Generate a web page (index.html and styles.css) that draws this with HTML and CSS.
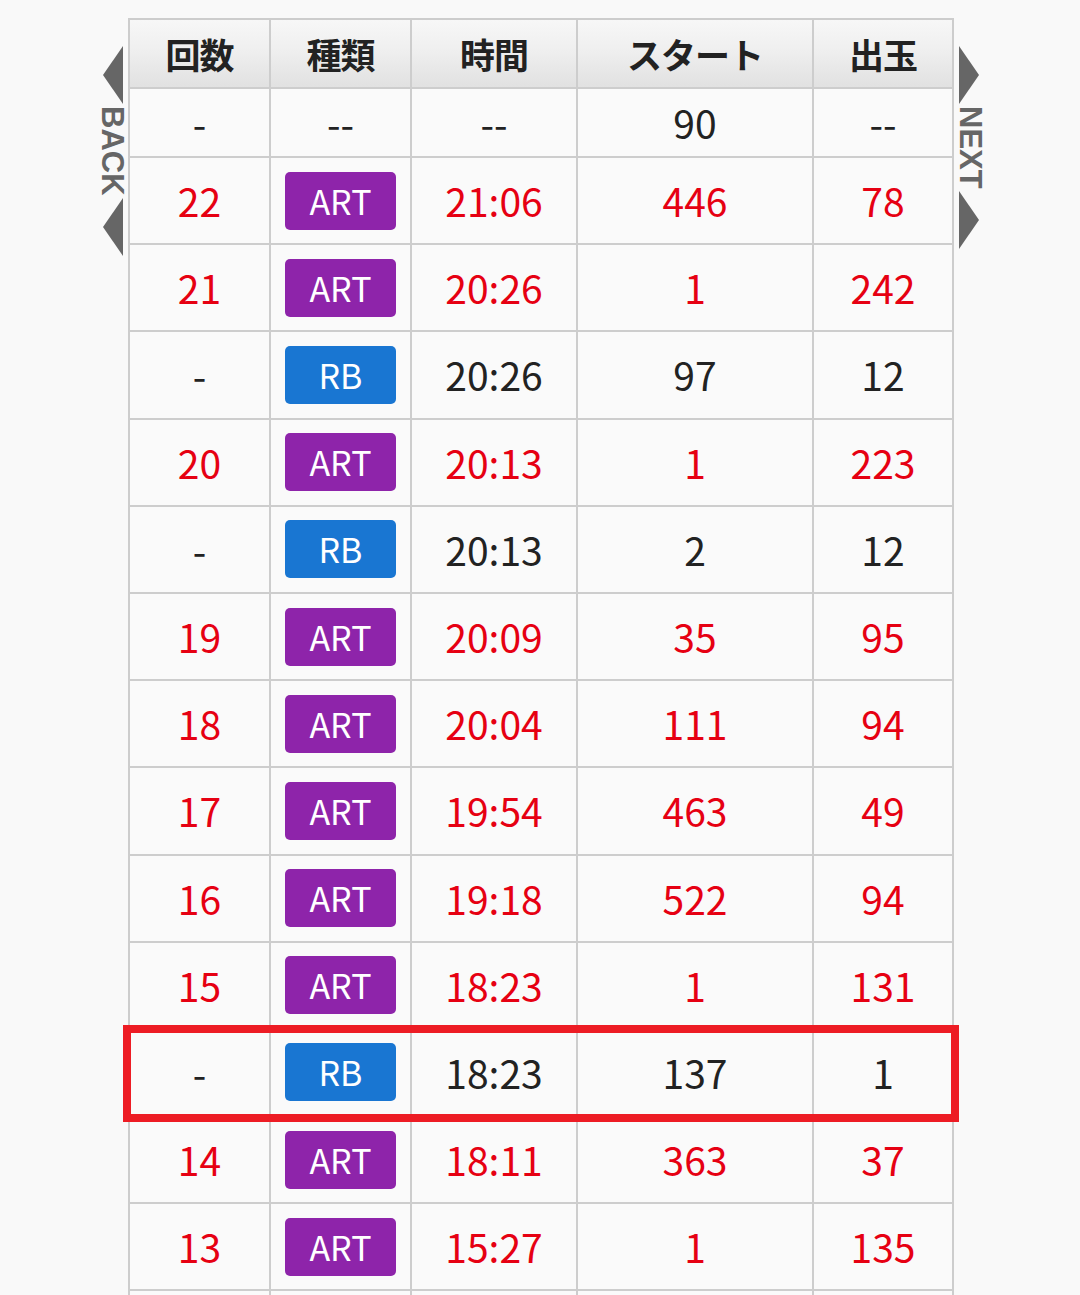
FILE: index.html
```html
<!DOCTYPE html>
<html lang="ja">
<head>
<meta charset="utf-8">
<title>大当り履歴</title>
<link rel="stylesheet" href="styles.css">
</head>
<body>
<div class="page">
  <a class="tab tab-back" href="#">
    <svg class="arrow" width="24" height="58" viewBox="0 0 24 58"><polygon points="23,0 23,58 3,29" /></svg>
    <span class="tab-label">BACK</span>
    <svg class="arrow" width="24" height="58" viewBox="0 0 24 58"><polygon points="23,0 23,58 3,29" /></svg>
  </a>

  <div class="table-wrap">
    <div class="grid">
      <div class="th">回数</div><div class="th">種類</div><div class="th">時間</div><div class="th">スタート</div><div class="th">出玉</div>

      <div class="td">-</div><div class="td">--</div><div class="td">--</div><div class="td">90</div><div class="td">--</div>

      <div class="td red">22</div><div class="td"><span class="badge art">ART</span></div><div class="td red">21:06</div><div class="td red">446</div><div class="td red">78</div>
      <div class="td red">21</div><div class="td"><span class="badge art">ART</span></div><div class="td red">20:26</div><div class="td red">1</div><div class="td red">242</div>
      <div class="td">-</div><div class="td"><span class="badge rb">RB</span></div><div class="td">20:26</div><div class="td">97</div><div class="td">12</div>
      <div class="td red">20</div><div class="td"><span class="badge art">ART</span></div><div class="td red">20:13</div><div class="td red">1</div><div class="td red">223</div>
      <div class="td">-</div><div class="td"><span class="badge rb">RB</span></div><div class="td">20:13</div><div class="td">2</div><div class="td">12</div>
      <div class="td red">19</div><div class="td"><span class="badge art">ART</span></div><div class="td red">20:09</div><div class="td red">35</div><div class="td red">95</div>
      <div class="td red">18</div><div class="td"><span class="badge art">ART</span></div><div class="td red">20:04</div><div class="td red">111</div><div class="td red">94</div>
      <div class="td red">17</div><div class="td"><span class="badge art">ART</span></div><div class="td red">19:54</div><div class="td red">463</div><div class="td red">49</div>
      <div class="td red">16</div><div class="td"><span class="badge art">ART</span></div><div class="td red">19:18</div><div class="td red">522</div><div class="td red">94</div>
      <div class="td red">15</div><div class="td"><span class="badge art">ART</span></div><div class="td red">18:23</div><div class="td red">1</div><div class="td red">131</div>
      <div class="td">-</div><div class="td"><span class="badge rb">RB</span></div><div class="td">18:23</div><div class="td">137</div><div class="td">1</div>
      <div class="td red">14</div><div class="td"><span class="badge art">ART</span></div><div class="td red">18:11</div><div class="td red">363</div><div class="td red">37</div>
      <div class="td red">13</div><div class="td"><span class="badge art">ART</span></div><div class="td red">15:27</div><div class="td red">1</div><div class="td red">135</div>
      <div class="td"></div><div class="td"></div><div class="td"></div><div class="td"></div><div class="td"></div>
    </div>
    <div class="highlight"></div>
  </div>

  <a class="tab tab-next" href="#">
    <svg class="arrow" width="24" height="58" viewBox="0 0 24 58"><polygon points="1,0 1,58 21,29" /></svg>
    <span class="tab-label">NEXT</span>
    <svg class="arrow" width="24" height="58" viewBox="0 0 24 58"><polygon points="1,0 1,58 21,29" /></svg>
  </a>
</div>
</body>
</html>
```

FILE: styles.css
```css
html, body {
  margin: 0;
  padding: 0;
  background: #f9f9f9;
}

body {
  font-family: "Noto Sans CJK JP", "Noto Sans", sans-serif;
  color: #222;
}

.page {
  display: flex;
  align-items: flex-start;
  gap: 4px;
  padding: 18px 0 0 100px;
}

.tab {
  width: 24px;
  margin-top: 28px;
  display: flex;
  flex-direction: column;
  align-items: center;
  gap: 2px;
  text-decoration: none;
  color: #666;
}

.arrow {
  display: block;
}

.arrow polygon {
  fill: #666;
}

.tab-label {
  writing-mode: vertical-rl;
  font-family: "Liberation Sans", Arial, sans-serif;
  font-weight: bold;
  font-size: 31px;
  line-height: 24px;
  color: #666;
  letter-spacing: 0;
}

.table-wrap {
  position: relative;
}

.grid {
  display: grid;
  grid-template-columns: 139px 139px 164px 234px 138px;
  grid-template-rows: 67px 67px;
  grid-auto-rows: 85.2px;
  gap: 2px;
  padding: 2px;
  background: #cdcdcd;
  width: 826px;
  box-sizing: border-box;
}

.th,
.td {
  display: flex;
  align-items: center;
  justify-content: center;
  background: #fafafa;
}

.th {
  background: linear-gradient(#f7f7f7 0%, #efefef 45%, #e1e1e1 100%);
  font-weight: bold;
  font-size: 35px;
  color: #222;
  letter-spacing: -1px;
}

.td {
  font-size: 39px;
  line-height: 1;
  color: #222;
}

.td.red {
  color: #e60012;
}

.badge {
  display: flex;
  align-items: center;
  justify-content: center;
  width: 111px;
  height: 58px;
  border-radius: 5px;
  color: #fff;
  font-size: 34px;
}

.badge.art {
  background: #8e24aa;
}

.badge.rb {
  background: #1976d2;
}

.highlight {
  position: absolute;
  left: -5px;
  top: 1007px;
  width: 836px;
  height: 97px;
  border: 8px solid #ed1c24;
  box-sizing: border-box;
}
```
